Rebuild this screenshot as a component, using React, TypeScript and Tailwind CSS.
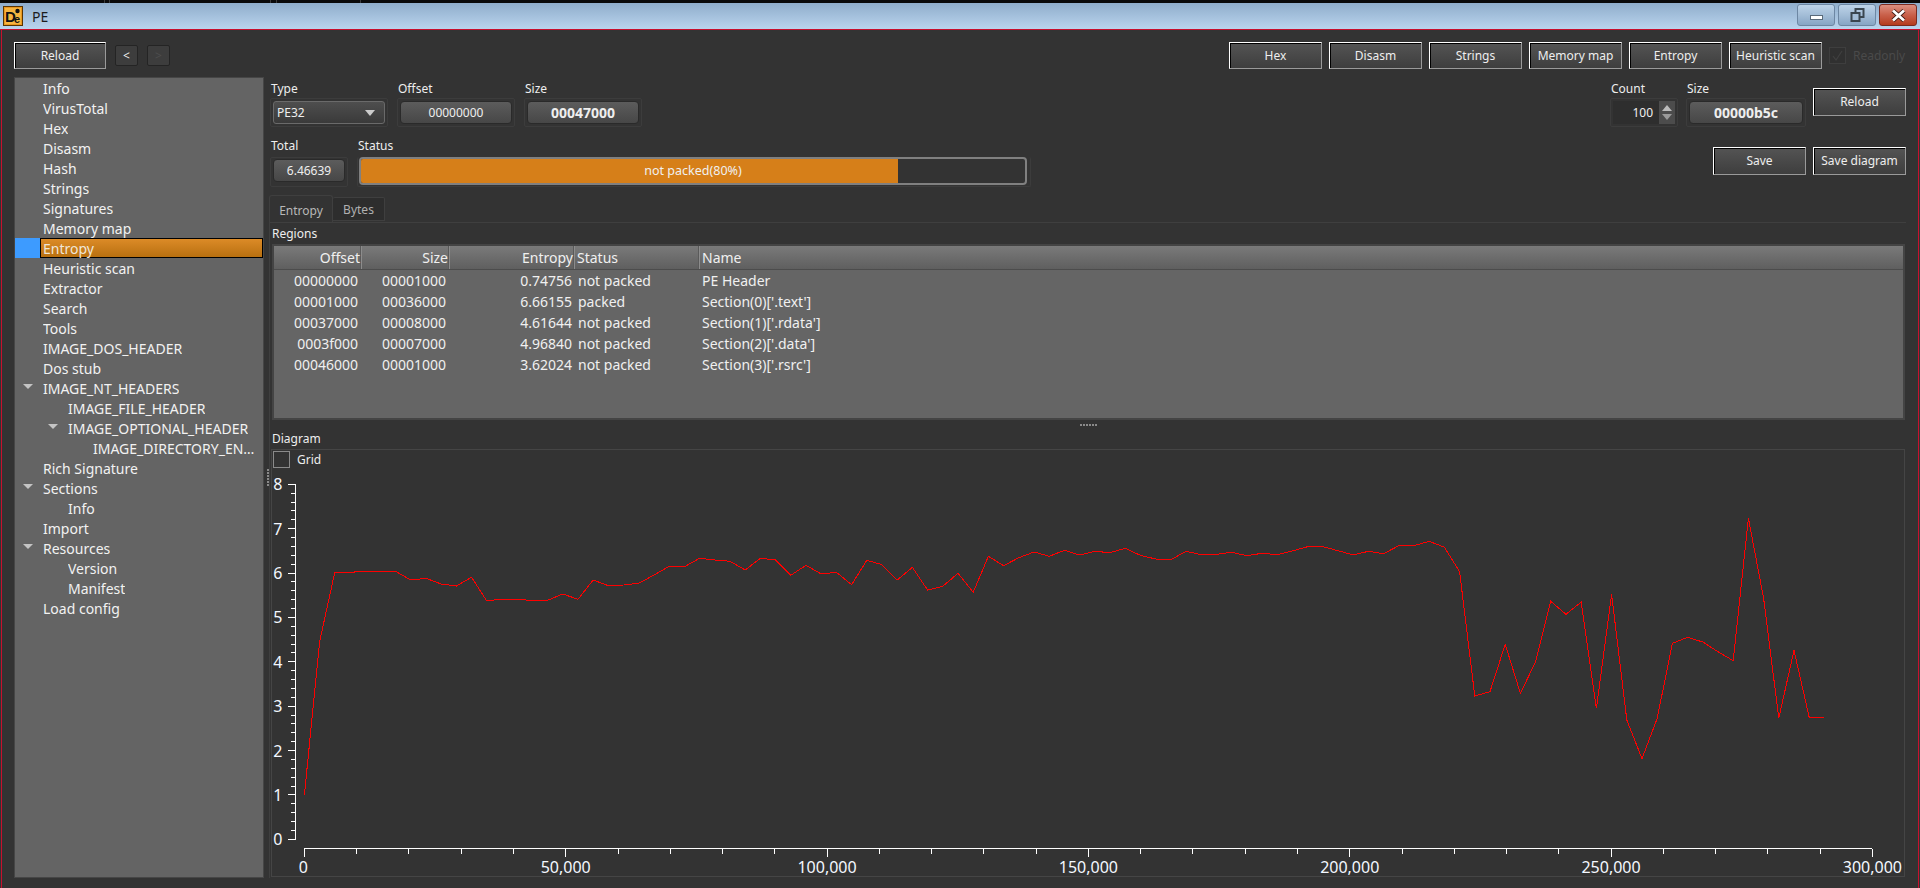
import React from "react";

const PTS = [975,515,307,307,304,304,304,330,325,342,348,322,393,387,387,392,391,372,388,330,347,345,340,315,289,290,265,270,274,300,265,270,316,286,312,307,344,271,284,330,292,360,349,310,367,259,287,263,246,259,241,255,244,248,235,256,267,269,244,254,253,247,257,250,254,243,230,230,242,255,244,251,227,227,214,232,305,678,665,523,670,575,394,433,396,715,373,750,866,745,520,502,516,545,572,145,385,745,541,742,742];

const X0 = 304.4;
const XW = 1568 / 30;
const Y8 = 484.3;
const YU = 44.375;

function Btn({ label, cls }: { label: string; cls: string }) {
  return (
    <div className={"flex items-center justify-center text-[12px] text-[#eeeeee] bg-gradient-to-b from-[#545454] to-[#3e3e3e] border border-t-white border-l-white border-r-[#9a9a9a] border-b-[#9a9a9a] shadow-[inset_1px_1px_0_#000000] " + cls}>
      {label}
    </div>
  );
}

function Val({ children, bold }: { children: React.ReactNode; bold?: boolean }) {
  return (
    <div className={"h-[23px] flex items-center justify-center rounded-[4px] bg-gradient-to-b from-[#5c5c5c] to-[#474747] border border-[#2a2a2a] text-[#eeeeee] " + (bold ? "font-bold text-[14px]" : "text-[12px]")}>
      {children}
    </div>
  );
}

function Field({ label, w, children }: { label: string; w: string; children: React.ReactNode }) {
  return (
    <div className={"flex flex-col " + w}>
      <div className="h-[14px] leading-[14px] pl-px mb-[2px] text-[12px] text-[#eeeeee]">{label}</div>
      <div className="h-[29px] p-[2px] border border-[#3c3c3c] rounded-[2px]">{children}</div>
    </div>
  );
}

const TREE: [string, number, boolean?][] = [
  ["Info", 0], ["VirusTotal", 0], ["Hex", 0], ["Disasm", 0], ["Hash", 0], ["Strings", 0], ["Signatures", 0], ["Memory map", 0],
  ["Entropy", 0], ["Heuristic scan", 0], ["Extractor", 0], ["Search", 0], ["Tools", 0], ["IMAGE_DOS_HEADER", 0], ["Dos stub", 0],
  ["IMAGE_NT_HEADERS", 0, true], ["IMAGE_FILE_HEADER", 1], ["IMAGE_OPTIONAL_HEADER", 1, true], ["IMAGE_DIRECTORY_ENTRIES", 2],
  ["Rich Signature", 0], ["Sections", 0, true], ["Info", 1], ["Import", 0], ["Resources", 0, true], ["Version", 1], ["Manifest", 1], ["Load config", 0],
];

const PAD = ["pl-[28px]", "pl-[53px]", "pl-[78px]"];
const ARROW = ["ml-[8px]", "ml-[33px]", "ml-[58px]"];

function Sidebar() {
  return (
    <div className="w-[250px] shrink-0 bg-[#646464] border border-[#464646] text-[14px] text-[#f2f2f2]">
      {TREE.map(([t, lvl, open], i) => {
        if (i === 8) {
          return (
            <div key={i} className="h-[20px] flex">
              <div className="w-[25px] bg-[#3d9bff]" />
              <div className="flex-1 flex items-center pl-[2px] bg-gradient-to-b from-[#dc8b27] to-[#b8700f] border border-black text-[#f0e6d8]">{t}</div>
            </div>
          );
        }
        return (
          <div key={i} className={"relative h-[20px] flex items-center pr-[6px] " + PAD[lvl]}>
            {open && (
              <div className={"absolute left-0 top-[6px] w-0 h-0 border-x-[5px] border-x-transparent border-t-[5px] border-t-[#c4c4c4] " + ARROW[lvl]} />
            )}
            <span className="truncate">{t}</span>
          </div>
        );
      })}
    </div>
  );
}

function Chart() {
  const xs = Array.from({ length: 31 }, (_, i) => i);
  const ys = Array.from({ length: 41 }, (_, i) => i);
  const pts = PTS.map((v, i) => `${(X0 + 15.2 * i).toFixed(1)},${(470 + v / 3).toFixed(1)}`).join(" ");
  return (
    <svg width="1632" height="407" viewBox="272 469 1632 407" className="block overflow-visible">
      <g stroke="#ffffff" strokeWidth="1" shapeRendering="crispEdges">
        <line x1="295.5" y1={Y8} x2="295.5" y2={Y8 + 8 * YU} />
        {ys.map((i) => {
          const y = Y8 + (i * YU) / 5;
          return <line key={i} x1={i % 5 === 0 ? 288 : 291} y1={y} x2="295.5" y2={y} />;
        })}
        <line x1={X0} y1="848.5" x2={X0 + 30 * XW} y2="848.5" />
        {xs.map((i) => {
          const x = X0 + i * XW;
          return <line key={i} x1={x} y1="848.5" x2={x} y2={i % 5 === 0 ? 857 : 853.5} />;
        })}
      </g>
      <g fill="#f4f8ff" fontSize="16" fontFamily="'Noto Sans','Liberation Sans',sans-serif">
        {[8, 7, 6, 5, 4, 3, 2, 1, 0].map((n) => (
          <text key={n} x="282.5" y={Y8 + (8 - n) * YU + 6} textAnchor="end">{n}</text>
        ))}
        {["0", "50,000", "100,000", "150,000", "200,000", "250,000", "300,000"].map((s, i) => (
          <text key={s} x={X0 + i * 5 * XW - (i === 0 ? 1 : 0)} y="873" textAnchor="middle">{s}</text>
        ))}
      </g>
      <polyline points={pts} fill="none" stroke="#ff0000" strokeWidth="1" shapeRendering="crispEdges" />
    </svg>
  );
}

const ROWS = [
  ["00000000", "00001000", "0.74756", "not packed", "PE Header"],
  ["00001000", "00036000", "6.66155", "packed", "Section(0)['.text']"],
  ["00037000", "00008000", "4.61644", "not packed", "Section(1)['.rdata']"],
  ["0003f000", "00007000", "4.96840", "not packed", "Section(2)['.data']"],
  ["00046000", "00001000", "3.62024", "not packed", "Section(3)['.rsrc']"],
];

function Regions() {
  const grid = "grid grid-cols-[88px_88px_125px_125px_1fr]";
  const hc = "flex items-center border-r border-[#8c8c8c] shadow-[inset_-1px_0_0_#5a5a5a]";
  return (
    <div className="h-[176px] mt-[3px] ml-px border-2 border-[#444444] bg-[#656565] text-[14px] text-[#f0f0f0]">
      <div className={grid + " h-[24px] bg-gradient-to-b from-[#7a7a7a] to-[#5f5f5f] border-b border-[#4c4c4c]"}>
        <div className={hc + " justify-end pr-[1px]"}>Offset</div>
        <div className={hc + " justify-end pr-[1px]"}>Size</div>
        <div className={hc + " justify-end pr-[1px]"}>Entropy</div>
        <div className={hc + " pl-[2px]"}>Status</div>
        <div className="flex items-center pl-[2px]">Name</div>
      </div>
      {ROWS.map((r, i) => (
        <div key={i} className={grid + " h-[21px] items-center"}>
          <div className="text-right pr-[4px]">{r[0]}</div>
          <div className="text-right pr-[4px]">{r[1]}</div>
          <div className="text-right pr-[3px]">{r[2]}</div>
          <div className="pl-[3px]">{r[3]}</div>
          <div className="pl-[2px]">{r[4]}</div>
        </div>
      ))}
    </div>
  );
}

export default function App() {
  return (
    <div className="w-[1920px] h-[888px] flex flex-col overflow-hidden bg-[#333333] font-['Noto_Sans','Liberation_Sans',sans-serif]">
      <div className="h-[3px] bg-[#0a0a0a] flex">
        <div className="w-[105px] border-r border-[#3a3a3a]" />
        <div className="w-[5px] border-r border-[#3a3a3a]" />
        <div className="w-[161px] border-r border-[#3a3a3a]" />
        <div className="w-[6px] border-r border-[#3a3a3a]" />
        <div className="w-[84px] border-r border-[#3a3a3a]" />
      </div>
      <div className="h-[26px] flex items-center pl-[3px] pr-[3px] bg-gradient-to-b from-[#8fadcb] to-[#bad4ee]">
        <svg width="20" height="20" viewBox="0 0 20 20" className="shrink-0">
          <rect x="0.5" y="0.5" width="19" height="19" fill="#e8971f" stroke="#5a3500" />
          <rect x="2" y="2" width="16" height="16" fill="#f7b53f" />
          <text x="2" y="16" fontSize="15" fontWeight="700" fontFamily="'Liberation Sans',sans-serif" fill="#111111">D</text>
          <text x="11" y="17" fontSize="11" fontWeight="700" fontFamily="'Liberation Sans',sans-serif" fill="#111111">e</text>
          <circle cx="14.5" cy="5" r="2.2" fill="#111111" />
        </svg>
        <span className="ml-[9px] text-[14px] text-[#1c1c1c]">PE</span>
        <div className="ml-auto flex items-start gap-[3px] self-start pt-px">
          <div className="w-[38px] h-[22px] flex items-center justify-center rounded-[3px] border border-[#6d87a3] bg-gradient-to-b from-[#bdd3e8] via-[#a3bdd7] to-[#87a5c4]">
            <div className="w-[13px] h-[5px] mt-[4px] bg-white border border-[#5a6a7a]" />
          </div>
          <div className="w-[38px] h-[22px] flex items-center justify-center rounded-[3px] border border-[#6d87a3] bg-gradient-to-b from-[#bdd3e8] via-[#a3bdd7] to-[#87a5c4]">
            <svg width="15" height="14" viewBox="0 0 15 14">
              <rect x="5.5" y="1" width="8" height="8" fill="none" stroke="#3a4650" strokeWidth="2" />
              <rect x="1.5" y="5" width="8" height="8" fill="#a3bdd7" stroke="#3a4650" strokeWidth="2" />
            </svg>
          </div>
          <div className="w-[38px] h-[22px] flex items-center justify-center rounded-[3px] border border-[#7a2b20] bg-gradient-to-b from-[#dc8f80] via-[#c9604a] to-[#b43a1c]">
            <svg width="15" height="13" viewBox="0 0 15 13">
              <path d="M2 1.5 L13 11.5 M13 1.5 L2 11.5" stroke="#3f1a12" strokeWidth="4.4" />
              <path d="M2 1.5 L13 11.5 M13 1.5 L2 11.5" stroke="#ffffff" strokeWidth="2.8" />
            </svg>
          </div>
        </div>
      </div>
      <div className="h-px bg-[#c8102e]" />
      <div className="flex-1 min-h-0 mx-px flex flex-col border-x border-[#c8102e]">
        <div className="flex items-center h-[27px] mt-[12px] mb-[8px] px-[12px]">
          <Btn label="Reload" cls="w-[92px] h-[27px]" />
          <div className="ml-[9px] w-[23px] h-[21px] flex items-center justify-center rounded-[2px] bg-[#3d3d3d] border border-[#242424] text-[12px] text-[#eeeeee]">&lt;</div>
          <div className="ml-[9px] w-[23px] h-[21px] flex items-center justify-center rounded-[2px] bg-[#3d3d3d] border border-[#242424] text-[12px] text-[#4d4d4d]">&gt;</div>
          <div className="ml-auto flex items-center gap-[7px]">
            {["Hex", "Disasm", "Strings", "Memory map", "Entropy", "Heuristic scan"].map((t) => (
              <Btn key={t} label={t} cls="w-[93px] h-[27px]" />
            ))}
            <div className="w-[17px] h-[17px] flex items-center justify-center border border-[#3e3e3e] bg-[#303030]">
              <svg width="13" height="13" viewBox="0 0 13 13">
                <path d="M2 7 L5 11 L11 2" fill="none" stroke="#404040" strokeWidth="1.2" />
              </svg>
            </div>
            <div className="w-[53px] text-[12px] text-[#4a4a4a]">Readonly</div>
          </div>
        </div>
        <div className="flex-1 min-h-0 flex px-[12px] pb-[10px]">
          <Sidebar />
          <div className="w-[5px] shrink-0 flex flex-col items-center justify-center gap-[1px] pl-[2px]">
            {[0, 1, 2, 3, 4, 5].map((i) => <div key={i} className="w-[2px] h-[2px] bg-[#8a8a8a]" />)}
          </div>
          <div className="flex-1 min-w-0 flex flex-col pt-[5px]">
            <div className="flex items-start pl-px">
              <Field label="Type" w="w-[118px]">
                <div className="h-[23px] flex items-center justify-between pl-[3px] pr-[9px] rounded-[3px] bg-gradient-to-b from-[#4e4e4e] to-[#3a3a3a] border border-[#6a6a6a] text-[12px] text-[#eeeeee]">
                  <span>PE32</span>
                  <div className="w-0 h-0 border-x-[5px] border-x-transparent border-t-[6px] border-t-[#cccccc]" />
                </div>
              </Field>
              <div className="w-[9px]" />
              <Field label="Offset" w="w-[118px]"><Val>00000000</Val></Field>
              <div className="w-[9px]" />
              <Field label="Size" w="w-[118px]"><Val bold>00047000</Val></Field>
              <div className="ml-auto flex items-start">
                <Field label="Count" w="w-[68px]">
                  <div className="h-[23px] flex bg-[#2e2e2e]">
                    <div className="flex-1 flex items-center justify-end pr-[6px] text-[12px] text-[#eeeeee]">100</div>
                    <div className="w-[16px] flex flex-col items-center justify-center gap-[3px] bg-[#4c4c4c]">
                      <div className="w-0 h-0 border-x-[5px] border-x-transparent border-b-[6px] border-b-[#bbbbbb]" />
                      <div className="w-0 h-0 border-x-[5px] border-x-transparent border-t-[6px] border-t-[#9a9a9a]" />
                    </div>
                  </div>
                </Field>
                <div className="w-[8px]" />
                <Field label="Size" w="w-[120px]"><Val bold>00000b5c</Val></Field>
                <div className="w-[7px]" />
                <Btn label="Reload" cls="w-[93px] h-[28px] mt-[6px]" />
              </div>
            </div>
            <div className="flex items-start mt-[12px] pl-px">
              <div className="flex flex-col w-[78px]">
                <div className="h-[14px] leading-[14px] pl-px mb-[4px] text-[12px] text-[#eeeeee]">Total</div>
                <div className="h-[30px] pt-px px-[2px] border border-[#3c3c3c] rounded-[2px]"><Val>6.46639</Val></div>
              </div>
              <div className="w-[9px]" />
              <div className="flex flex-col w-[674px]">
                <div className="h-[14px] leading-[14px] pl-px mb-[4px] text-[12px] text-[#eeeeee]">Status</div>
                <div className="h-[30px] pr-[3px] pb-[2px] pl-px border-r border-b border-l border-[#3c3c3c] rounded-[2px]">
                  <div className="relative h-[28px] border-2 border-[#808080] rounded-[4px] overflow-hidden">
                    <div className="w-[537px] h-full bg-[#d67f19]" />
                    <div className="absolute inset-0 flex items-center justify-center text-[12.5px] text-[#f0f0f0]">not packed(80%)</div>
                  </div>
                </div>
              </div>
              <div className="ml-auto mt-[8px] flex gap-[7px]">
                <Btn label="Save" cls="w-[93px] h-[28px]" />
                <Btn label="Save diagram" cls="w-[93px] h-[28px]" />
              </div>
            </div>
            <div className="flex mt-[8px] h-[27px] items-end text-[12px]">
              <div className="w-[64px] h-[27px] pt-[3px] flex items-center justify-center rounded-t-[3px] border-x border-t border-[#3f3f3f] text-[#b8b8b8]">Entropy</div>
              <div className="w-[52px] h-[24px] mb-px pt-px flex items-center justify-center rounded-t-[2px] border-r border-t border-b border-[#3f3f3f] bg-[#2d2d2d] text-[#b0b0b0]">Bytes</div>
            </div>
            <div className="flex-1 min-h-0 flex flex-col border-t border-l border-[#3f3f3f] pl-px pr-px">
              <div className="h-[14px] leading-[14px] mt-[4px] pl-px text-[12px] text-[#eeeeee]">Regions</div>
              <Regions />
              <div className="h-[12px] flex justify-center items-start pt-[4px] gap-[1px]">
                {[0, 1, 2, 3, 4, 5].map((i) => <div key={i} className="w-[2px] h-[2px] bg-[#8a8a8a]" />)}
              </div>
              <div className="h-[14px] leading-[14px] pl-px mb-[3px] text-[12px] text-[#eeeeee]">Diagram</div>
              <div className="h-[428px] border border-[#454545]">
                <div className="h-[19px] flex items-center pl-px">
                  <div className="w-[17px] h-[17px] border border-[#8a8a8a]" />
                  <span className="ml-[7px] mt-px text-[12px] text-[#eeeeee]">Grid</span>
                </div>
                <Chart />
              </div>
            </div>
          </div>
        </div>
      </div>
    </div>
  );
}
